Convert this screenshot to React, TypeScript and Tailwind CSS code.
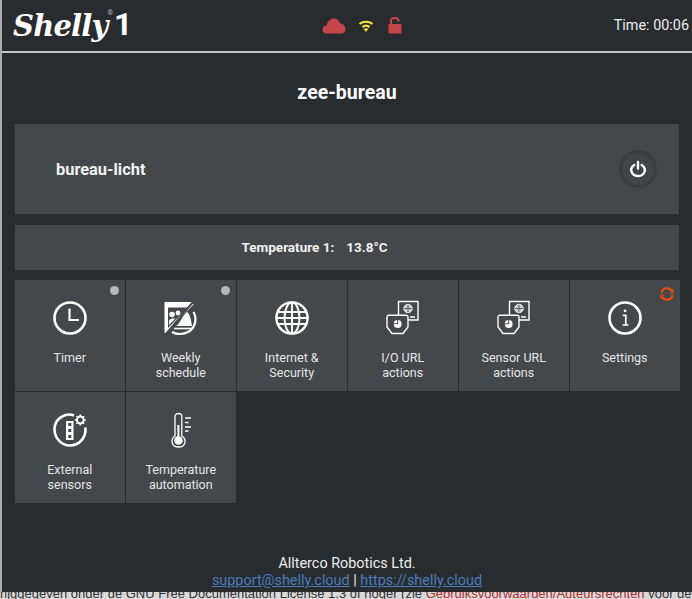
import type { ReactNode } from 'react'

function ClockIcon() {
    return (
        <svg width="36" height="36" viewBox="0 0 36 36" fill="none" stroke="white">
            <circle cx="18" cy="18" r="15.5" strokeWidth="2.6" />
            <path d="M17.5 8.5V20H27" strokeWidth="2.2" />
        </svg>
    )
}

function WeeklyIcon() {
    return (
        <svg width="36" height="36" viewBox="0 0 36 36">
            <path d="M1.5 2H27C29 2 30 3 30.5 4.5L3 33H1.5Z" fill="white" />
            <path d="M5 7.5H25L5 28Z" fill="#45484b" />
            <circle cx="9" cy="14.5" r="2.8" fill="white" />
            <path d="M6 25V21.5C6 19.5 8 18.5 10 18.5H12.5Z" fill="white" />
            <circle cx="15" cy="13" r="2.4" fill="white" />
            <path d="M13 26C17 24 19 16 24 12C28 15 28 22 29 26Z" fill="white" />
            <path d="M11 28.5H30" stroke="white" strokeWidth="1.6" />
            <path d="M30.5 1.5L3 34" stroke="#45484b" strokeWidth="2" />
            <path d="M9 32C13 34.5 20 35 26 31.5C32 27.5 34.5 19 30.5 12" fill="none" stroke="white" strokeWidth="2.2" />
        </svg>
    )
}

function GlobeIcon() {
    return (
        <svg width="36" height="36" viewBox="0 0 36 36" fill="none" stroke="white" strokeWidth="1.9">
            <circle cx="18" cy="18" r="15.6" strokeWidth="2.4" />
            <ellipse cx="18" cy="18" rx="7.5" ry="15.6" />
            <path d="M18 2V34M3.5 12H32.5M2.5 18H33.5M3.5 24H32.5" />
        </svg>
    )
}

function ActionsIcon() {
    return (
        <svg width="36" height="36" viewBox="0 0 36 36" fill="none" stroke="white">
            <path d="M13.5 15V1.5H33V20H23" strokeWidth="1.4" />
            <circle cx="23" cy="8.5" r="4.2" fill="#c9cacb" stroke="white" strokeWidth="1" />
            <path d="M19 8.5H27M23 4.5V12.5" stroke="#45484b" strokeWidth="0.8" />
            <path d="M25 17H30" strokeWidth="1.5" />
            <path d="M2 17C2 15.8 2.6 15.2 3.5 15.2H21.5C22.4 15.2 23 15.8 23 17V27L18 33.5H7L2 27Z" strokeWidth="1.4" fill="#45484b" />
            <circle cx="12.7" cy="24" r="3.9" fill="white" stroke="none" />
            <path d="M8.8 24.5C10.5 23 11.5 23 12.7 24V20" stroke="#45484b" strokeWidth="1" />
        </svg>
    )
}

function InfoIcon() {
    return (
        <svg width="36" height="36" viewBox="0 0 36 36" fill="none" stroke="white">
            <circle cx="18" cy="18" r="15.5" strokeWidth="2.6" />
            <circle cx="18" cy="10.8" r="1.4" fill="white" stroke="none" />
            <path d="M15.8 15.3H18.8V24.5M15.6 25H21.4" strokeWidth="1.7" />
        </svg>
    )
}

function SensorsIcon() {
    return (
        <svg width="36" height="36" viewBox="0 0 36 36" fill="none" stroke="white">
            <path d="M22 3.5C13 0 2 7 2.5 18C3 27 10 33.5 18 33.5C27 33.5 33.5 26 33.5 18C33.5 17 33.4 16.5 33.2 15.5" strokeWidth="2.6" />
            <rect x="14" y="9" width="7.5" height="19" fill="white" stroke="none" />
            <rect x="16.3" y="11" width="3" height="3" fill="#45484b" stroke="none" />
            <rect x="16.3" y="17" width="3" height="3" fill="#45484b" stroke="none" />
            <rect x="16.3" y="23" width="3" height="3" fill="#45484b" stroke="none" />
            <circle cx="28.3" cy="8" r="3.4" strokeWidth="2" />
            <path d="M28.3 2.5V4M28.3 12V13.5M22.8 8H24.3M32.3 8H33.8M24.5 4.2L25.5 5.2M31.1 10.8L32.1 11.8M32.1 4.2L31.1 5.2M25.5 10.8L24.5 11.8" strokeWidth="1.6" />
        </svg>
    )
}

function ThermoIcon() {
    return (
        <svg width="36" height="36" viewBox="0 0 36 36" fill="none" stroke="white">
            <path d="M12 24V4.5C12 0.5 18.8 0.5 18.8 4.5V24C24 27.5 23 35 15.4 35C8.5 35 7 27.5 12 24Z" strokeWidth="1.3" />
            <path d="M15.4 13V28" strokeWidth="2" />
            <circle cx="15.4" cy="28.5" r="4.3" fill="white" stroke="none" />
            <path d="M22 6H28M22 10.5H25.5M22 15H28M22 19H25.5" strokeWidth="1.5" />
        </svg>
    )
}

function Tile({ icon, label, badge }: { icon: ReactNode; label: ReactNode; badge?: ReactNode }) {
    return (
        <div className="relative flex h-[110.5px] flex-col items-center bg-[#45484b] pt-[20px]">
            {badge}
            <div className="h-9 w-9">{icon}</div>
            <div className="mt-[14px] text-center text-[12.5px] leading-[15px] text-[#e4e5e6]">{label}</div>
        </div>
    )
}

const Dot = <span className="absolute top-[6px] right-[6px] h-[9px] w-[9px] rounded-full bg-[#b5b7b8]" />

const Refresh = (
    <svg className="absolute top-[7px] right-[6px]" width="14" height="14" viewBox="0 0 14 14" fill="none" stroke="#e8500f" strokeWidth="2">
        <path d="M1.5 6C2 3 4 1.2 7 1.2C9.5 1.2 11 2.5 12 4.5" />
        <path d="M12.5 8C12 11 10 12.8 7 12.8C4.5 12.8 3 11.5 2 9.5" />
        <path d="M13 2V6H9.5" strokeWidth="1.2" />
        <path d="M1 12V8H4.5" strokeWidth="1.2" />
    </svg>
)

export default function App() {
    return (
        <div className="flex h-[599px] w-[692px] flex-col overflow-hidden bg-[#d9d9d9] font-['Roboto',sans-serif]">
            <div className="relative z-10 flex h-[592px] shrink-0 flex-col border-l-2 border-[#a9abac] bg-[#282c2f] text-white">
                <header className="flex h-[53px] shrink-0 items-center border-b-2 border-[#c4c6c7] pr-[3px]">
                    <div className="flex w-[320px] items-start pl-[11px]">
                        <span className="font-['DejaVu_Serif',serif] text-[29px] leading-[34px] font-bold italic tracking-[-0.8px]">Shelly</span>
                        <span className="mt-[1px] text-[7px] leading-none text-[#bbb]">®</span>
                        <span className="-mt-[4px] ml-[1px] text-[32px] leading-[38px] font-bold">1</span>
                    </div>
                    <div className="flex items-center">
                        <svg width="24" height="16" viewBox="0 0 24 16" fill="#c6454a">
                            <path d="M5 15.5C1.5 15.5 0.5 13.5 0.5 11.5C0.5 9 2.5 7.5 4.5 7.5C5.5 3 8.5 0.5 12 0.5C15.5 0.5 17.5 3 18 5.5C21.5 5.5 23.5 8 23.5 11C23.5 14 21.5 15.5 19 15.5Z" />
                        </svg>
                        <svg className="ml-[13px]" width="14" height="12" viewBox="0 0 14 12" fill="none" stroke="#f6e73a" strokeWidth="2.2">
                            <path d="M0.5 4C4 1 10 1 13.5 4" />
                            <path d="M3.5 7C5.5 5.5 8.5 5.5 10.5 7" />
                            <path d="M4.5 8.5H9.5L7 12Z" fill="#f6e73a" stroke="none" />
                        </svg>
                        <svg className="ml-[15px]" width="14" height="17" viewBox="0 0 14 17" fill="none">
                            <path d="M3 7V3.5C3 0.2 10.5 0.2 10.5 3.5V4.5" stroke="#c6454a" strokeWidth="2" />
                            <rect x="0.5" y="7" width="13" height="9.5" rx="0.7" fill="#c6454a" />
                        </svg>
                    </div>
                    <div className="ml-auto pt-[1px] text-[14.4px] text-[#eceded]">Time: 00:06</div>
                </header>

                <main className="flex flex-1 flex-col px-[13px]">
                    <h1 className="mt-[29px] mb-[21px] text-center text-[19.5px] leading-[21px] font-bold">zee-bureau</h1>

                    <div className="flex h-[90px] items-center justify-between bg-[#45484b] pr-[22px] pl-[41px]">
                        <span className="pt-[2px] text-[16.4px] font-bold text-[#f1f1f1]">bureau-licht</span>
                        <button className="flex h-[38px] w-[38px] items-center justify-center rounded-full border-[3px] border-[#3b3e41] bg-[#424548]">
                            <svg width="16" height="18" viewBox="0 0 17 18" fill="none" stroke="white" strokeWidth="2.5" strokeLinecap="round">
                                <path d="M8.5 1.5V8.5" />
                                <path d="M4.5 4.8C1.8 6.4 0.8 9.2 1.5 11.6C2.4 14.8 5.2 16.4 8.5 16.4C11.8 16.4 14.6 14.8 15.5 11.6C16.2 9.2 15.2 6.4 12.5 4.8" />
                            </svg>
                        </button>
                    </div>

                    <div className="mt-[11px] flex h-[45px] items-center justify-center bg-[#45484b] pr-[65px] text-[13.5px] font-bold text-[#f1f1f1]">
                        <span>Temperature 1:</span>
                        <span className="ml-[12px]">13.8°C</span>
                    </div>

                    <div className="mt-[10px] grid grid-cols-[repeat(6,109.5px)] gap-[1.5px]">
                        <Tile icon={<ClockIcon />} label="Timer" badge={Dot} />
                        <Tile icon={<WeeklyIcon />} label={<>Weekly<br />schedule</>} badge={Dot} />
                        <Tile icon={<GlobeIcon />} label={<>Internet &amp;<br />Security</>} />
                        <Tile icon={<ActionsIcon />} label={<>I/O URL<br />actions</>} />
                        <Tile icon={<ActionsIcon />} label={<>Sensor URL<br />actions</>} />
                        <Tile icon={<InfoIcon />} label="Settings" badge={Refresh} />
                        <Tile icon={<SensorsIcon />} label={<>External<br />sensors</>} />
                        <Tile icon={<ThermoIcon />} label={<>Temperature<br />automation</>} />
                    </div>
                </main>

                <footer className="pb-[3px] text-center text-[14.4px] leading-[17px] text-[#eceded]">
                    <div>Allterco Robotics Ltd.</div>
                    <div>
                        <a href="#" className="text-[#4a7cba] underline">support@shelly.cloud</a>
                        {' | '}
                        <a href="#" className="text-[#4a7cba] underline">https://shelly.cloud</a>
                    </div>
                </footer>
            </div>
            <div className="-mt-[6px] whitespace-nowrap font-['Liberation_Sans',sans-serif] text-[13px] leading-[15px] text-[#333]">
                rijggegeven onder de GNU Free Documentation License 1.3 of hoger (zie <span className="text-[#b03030]">Gebruiksvoorwaarden/Auteursrechten</span> voor details
            </div>
        </div>
    )
}
